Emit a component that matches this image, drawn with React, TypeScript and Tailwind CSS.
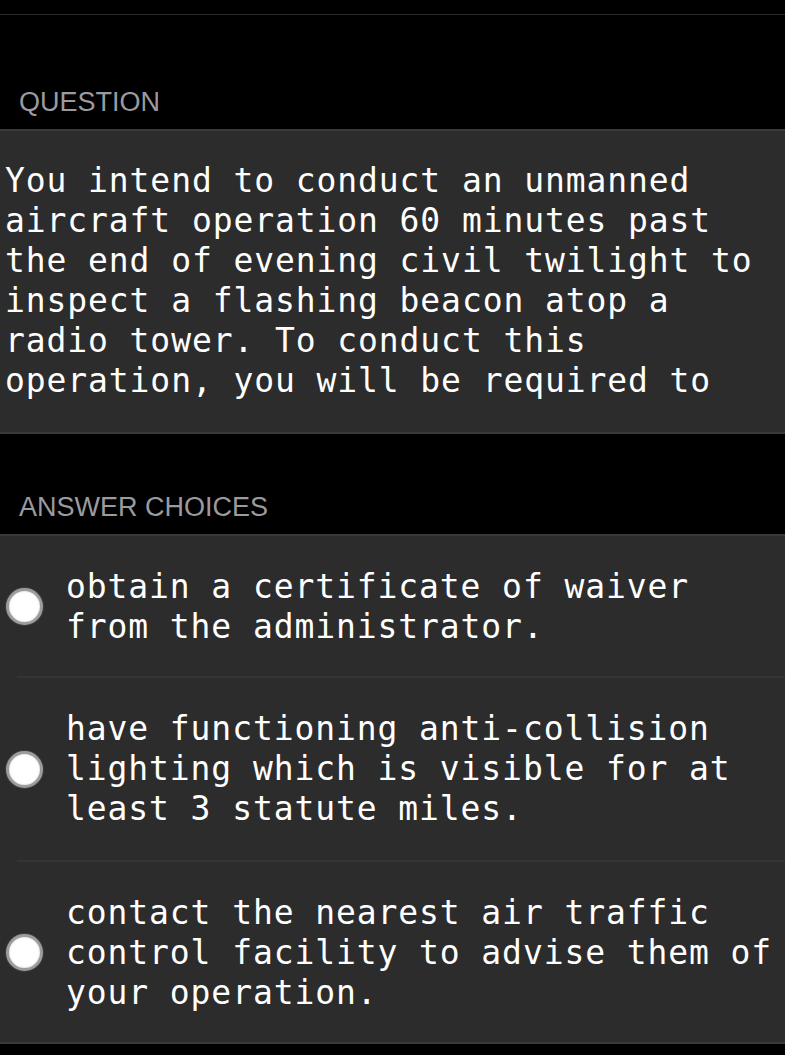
import React from 'react';

const mono = "font-['DejaVu_Sans_Mono','Liberation_Mono',monospace]";
const sans = "font-['Liberation_Sans','Helvetica',Arial,sans-serif]";

const question =
    'You intend to conduct an unmanned aircraft operation 60 minutes past the end of evening civil twilight to inspect a flashing beacon atop a radio tower. To conduct this operation, you will be required to';

const choices = [
    'obtain a certificate of waiver from the administrator.',
    'have functioning anti-collision lighting which is visible for at least 3 statute miles.',
    'contact the nearest air traffic control facility to advise them of your operation.',
];

function SectionLabel({ children, top }: { children: React.ReactNode; top: string }) {
    return (
        <div className={`${top} pb-[11px] pl-[19px]`}>
            <span className={`${sans} block text-[27px] leading-[32px] text-[#9a9a9f] uppercase`}>
                {children}
            </span>
        </div>
    );
}

function Radio() {
    return (
        <div className="w-[37px] h-[37px] rounded-full bg-white border-[3px] border-[#9c9c9c] shadow-[0_0_0_1px_#3d3d3d,inset_0_0_2px_rgba(0,0,0,0.25)] flex-shrink-0" />
    );
}

export default function App() {
    return (
        <div className="w-[785px] h-[1055px] bg-black overflow-hidden">
            <div className="h-[14px]" />
            <div className="h-px bg-[#2b2b2b]" />

            <SectionLabel top="pt-[71px]">Question</SectionLabel>

            {/* question body */}
            <div className="bg-[#2c2c2c] border-y-2 border-[#3a3a3a] pt-[30px] pb-[31px] pl-[5px]">
                <p className={`${mono} text-[33px] leading-[40px] tracking-[0.9px] text-white`}>{question}</p>
            </div>

            <SectionLabel top="pt-[57px]">Answer Choices</SectionLabel>

            {/* choices list */}
            <div className="bg-[#2c2c2c] border-y-2 border-[#3a3a3a]">
                {choices.map((c, i) => (
                    <div key={i} className="pl-[17px]">
                        <div
                            className={`flex items-center ${i > 0 ? 'border-t-2 border-[#353535]' : ''}`}
                        >
                            <div className="-ml-[11px] w-[60px] flex-shrink-0">
                                <Radio />
                            </div>
                            <p
                                className={`${mono} pt-[31px] ${i === 1 ? 'pb-[31px]' : 'pb-[29px]'} text-[33px] leading-[40px] tracking-[0.9px] text-white`}
                            >
                                {c}
                            </p>
                        </div>
                    </div>
                ))}
            </div>
        </div>
    );
}
